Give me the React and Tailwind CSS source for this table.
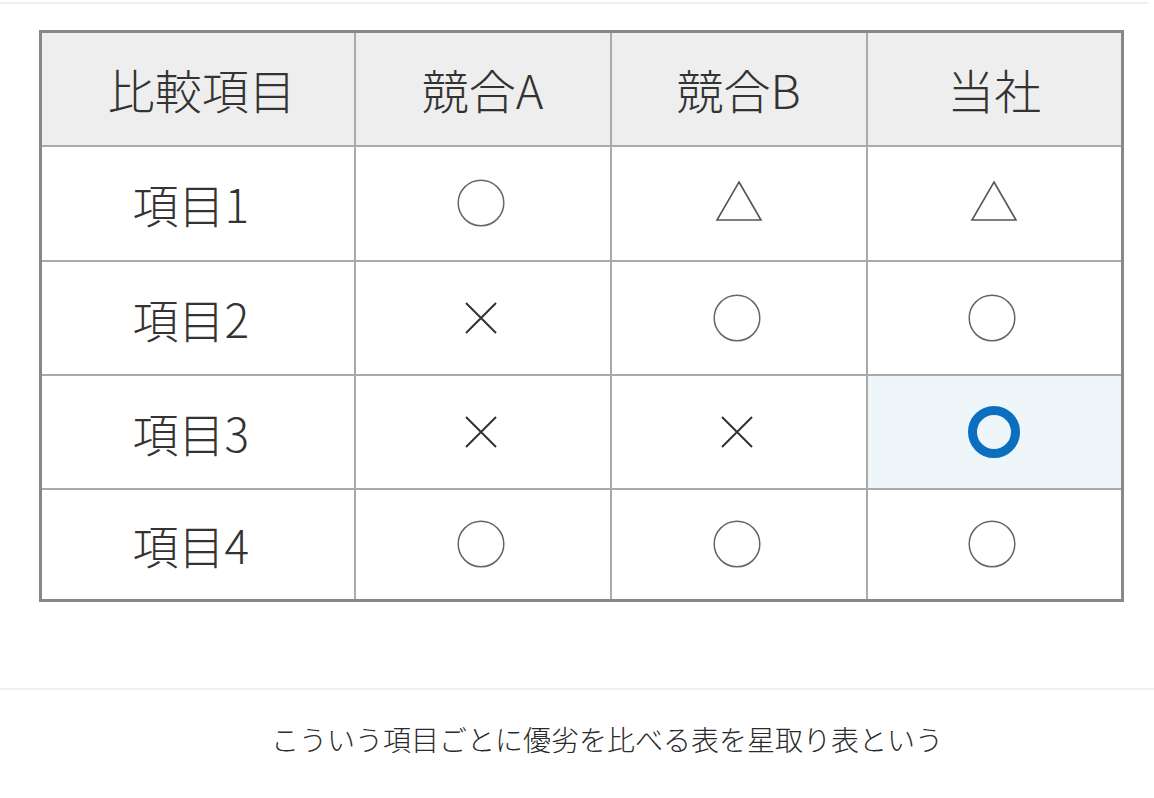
import React from "react";

const Circle = () => (
  <svg width="48" height="48" viewBox="0 0 48 48" className="mx-auto block -translate-x-[2px]">
    <circle cx="24" cy="24" r="22.8" fill="none" stroke="#666" strokeWidth="1.5" />
  </svg>
);

const Triangle = () => (
  <svg width="48" height="42" viewBox="0 0 48 42" className="mx-auto block -translate-y-[2px]">
    <polygon points="24,2 46,40 2,40" fill="none" stroke="#555" strokeWidth="1.6" strokeLinejoin="miter" />
  </svg>
);

const Cross = () => (
  <svg width="34" height="34" viewBox="0 0 34 34" className="mx-auto block -translate-x-[2px]">
    <path d="M2 2 L32 32 M32 2 L2 32" stroke="#333" strokeWidth="2" />
  </svg>
);

const BlueCircle = () => (
  <svg width="54" height="54" viewBox="0 0 54 54" className="mx-auto block">
    <circle cx="27" cy="27" r="21.5" fill="none" stroke="#0b6fbf" strokeWidth="9" />
  </svg>
);

const mark = {
  o: <Circle />,
  t: <Triangle />,
  x: <Cross />,
  O: <BlueCircle />,
};

const rows = [
  { name: "項目1", vals: ["o", "t", "t"], h: "h-[115px]" },
  { name: "項目2", vals: ["x", "o", "o"], h: "h-[114px]" },
  { name: "項目3", vals: ["x", "x", "O"], h: "h-[114px]" },
  { name: "項目4", vals: ["o", "o", "o"], h: "h-[112px]" },
];

const App = () => {
  return (
    <div
      className="w-[1154px] h-[798px] bg-white text-[#333]"
      style={{ fontFamily: '"Noto Sans CJK JP", "Noto Sans", sans-serif' }}
    >
      <div className="h-[2px] mt-[2px] bg-[#efefef] mr-[6px]" />

      <div className="pt-[26px] pl-[39px]">
        <table className="border-collapse border-[3px] border-[#888] w-[1082px] table-fixed">
          <colgroup>
            <col className="w-[314px]" />
            <col className="w-[256px]" />
            <col className="w-[256px]" />
            <col className="w-[256px]" />
          </colgroup>
          <thead>
            <tr className="h-[114px] bg-[#eeeeee]">
              {["比較項目", "競合A", "競合B", "当社"].map((h, i) => (
                <th
                  key={h}
                  className={`border-2 border-[#aaa] text-[47px] font-light text-center text-[#333] leading-none ${
                    i === 0 ? "pl-2" : ""
                  }`}
                >
                  {h}
                </th>
              ))}
            </tr>
          </thead>
          <tbody>
            {rows.map((r) => (
              <tr key={r.name} className={r.h}>
                <td className="border-2 border-[#aaa] text-[46px] font-light text-center leading-none pr-[14px]">
                  {r.name}
                </td>
                {r.vals.map((v, i) => (
                  <td
                    key={i}
                    className={`border-2 border-[#aaa] text-center ${
                      v === "O" ? "bg-[#eef6f9]" : ""
                    }`}
                  >
                    {mark[v]}
                  </td>
                ))}
              </tr>
            ))}
          </tbody>
        </table>
      </div>

      <div className="h-[2px] mt-[86px] bg-[#efefef]" />

      <p className="mt-[35px] text-[28px] font-light text-center pl-[60px] text-[#2a2a2a] leading-none">
        こういう項目ごとに優劣を比べる表を星取り表という
      </p>
    </div>
  );
};

export default App;
